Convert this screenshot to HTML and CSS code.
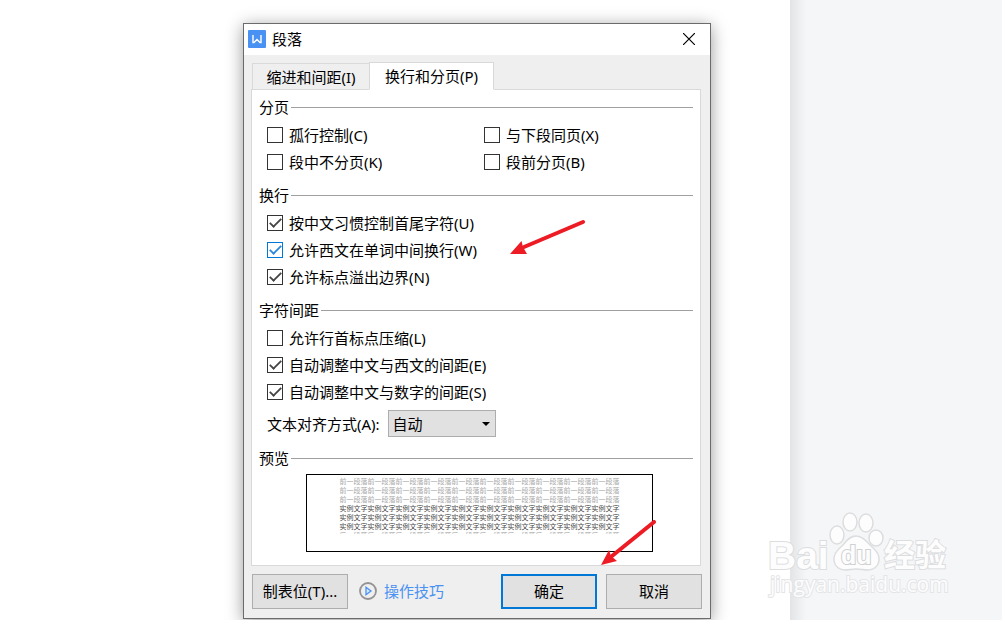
FILE: index.html
```html
<!DOCTYPE html>
<html lang="zh-CN">
<head>
    <meta charset="UTF-8">
    <meta name="viewport" content="width=device-width, initial-scale=1.0">
    <title>段落</title>
    <link rel="stylesheet" href="styles.css">
</head>
<body>
    <div class="workspace">
        <div class="page"></div>
        <div class="side"></div>
    </div>

    <!-- 段落对话框 -->
    <div class="dialog" role="dialog" aria-labelledby="dialog-title">
        <header class="titlebar">
            <svg class="logo" width="18" height="18" viewBox="0 0 18 18">
                <rect width="18" height="18" rx="1" fill="#4991f2"/>
                <path d="M5 5v7.500h1L9 9.500l3 3h1V5" fill="none" stroke="#fff" stroke-width="1.400"/>
            </svg>
            <h1 id="dialog-title">段落</h1>
            <button class="close" aria-label="关闭">
                <svg width="12" height="12" viewBox="0 0 12 12">
                    <path d="M0 0l12 12M12 0L0 12" stroke="#000" stroke-width="1.200"/>
                </svg>
            </button>
        </header>

        <div class="content">
            <div class="tabs" role="tablist">
                <button class="tab" role="tab">缩进和间距(I)</button>
                <button class="tab active" role="tab" aria-selected="true">换行和分页(P)</button>
            </div>

            <div class="panel" role="tabpanel">
                <section class="group">
                    <h2>分页</h2>
                    <div class="options two">
                        <label><input type="checkbox">孤行控制(C)</label>
                        <label><input type="checkbox">与下段同页(X)</label>
                        <label><input type="checkbox">段中不分页(K)</label>
                        <label><input type="checkbox">段前分页(B)</label>
                    </div>
                </section>

                <section class="group">
                    <h2>换行</h2>
                    <div class="options">
                        <label><input type="checkbox" checked>按中文习惯控制首尾字符(U)</label>
                        <label><input type="checkbox" class="hot" checked>允许西文在单词中间换行(W)</label>
                        <label><input type="checkbox" checked>允许标点溢出边界(N)</label>
                    </div>
                </section>

                <section class="group">
                    <h2>字符间距</h2>
                    <div class="options">
                        <label><input type="checkbox">允许行首标点压缩(L)</label>
                        <label><input type="checkbox" checked>自动调整中文与西文的间距(E)</label>
                        <label><input type="checkbox" checked>自动调整中文与数字的间距(S)</label>
                    </div>
                    <div class="align">
                        <label for="align">文本对齐方式(A):</label>
                        <span class="select">
                            <select id="align">
                                <option>自动</option>
                            </select>
                        </span>
                    </div>
                </section>

                <section class="group">
                    <h2>预览</h2>
                    <div class="preview">
                        <div class="sample">
                            <p>前一段落前一段落前一段落前一段落前一段落前一段落前一段落前一段落前一段落前一段落</p>
                            <p>前一段落前一段落前一段落前一段落前一段落前一段落前一段落前一段落前一段落前一段落</p>
                            <p>前一段落前一段落前一段落前一段落前一段落前一段落前一段落前一段落前一段落前一段落</p>
                            <p class="current">实例文字实例文字实例文字实例文字实例文字实例文字实例文字实例文字实例文字实例文字</p>
                            <p class="current">实例文字实例文字实例文字实例文字实例文字实例文字实例文字实例文字实例文字实例文字</p>
                            <p class="current">实例文字实例文字实例文字实例文字实例文字实例文字实例文字实例文字实例文字实例文字</p>
                            <p>后一段落后一段落后一段落后一段落后一段落后一段落后一段落后一段落后一段落后一段落</p>
                        </div>
                    </div>
                </section>
            </div>

            <footer class="actions">
                <button class="button">制表位(T)...</button>
                <a href="#" class="tips">
                    <svg width="18" height="18" viewBox="0 0 18 18">
                        <circle cx="9" cy="9" r="8" fill="none" stroke="#939393" stroke-width="1.800"/>
                        <path d="M7 5.200v7.600L12 9z" fill="#d9e8fd" stroke="#4991f2" stroke-width="1.300"/>
                    </svg>
                    操作技巧
                </a>
                <button class="button primary">确定</button>
                <button class="button">取消</button>
            </footer>
        </div>

        <!-- 红色箭头 -->
        <svg class="arrow arrow-wrap" width="76" height="36" viewBox="0 0 76 36">
            <path d="M14 28L73 3" stroke="#ed1c24" stroke-width="4" stroke-linecap="round"/>
            <path d="M0 35l11.500-13 1.500 6 4 7z" fill="#ed1c24"/>
        </svg>
        <svg class="arrow arrow-ok" width="56" height="46" viewBox="0 0 56 46">
            <path d="M11 36L53 2" stroke="#ed1c24" stroke-width="4" stroke-linecap="round"/>
            <path d="M0 45l8-15 2 6 6 5z" fill="#ed1c24"/>
        </svg>
    </div>

    <!-- 水印 -->
    <svg class="watermark" width="190" height="92" viewBox="0 0 190 92">
        <g fill="#fdfdfd" stroke="#dcdddf" stroke-width="1.500">
            <ellipse cx="72" cy="23" rx="7" ry="9"/>
            <ellipse cx="85" cy="10" rx="7" ry="9"/>
            <ellipse cx="101" cy="11" rx="7" ry="9"/>
            <ellipse cx="111" cy="26" rx="7" ry="8"/>
            <path d="M91 24c-7 0-10 6-14 10-5 4-9 9-8 15 1 6 6 9 11 9 4 0 7-1 11-1s8 1 12 1c5 0 10-3 11-9 1-6-3-11-8-15-4-4-8-10-15-10z"/>
        </g>
        <g class="wm-text">
            <text class="wm-name" x="3" y="57">Bai</text>
            <text class="wm-du" x="76" y="52">du</text>
            <text class="wm-cn" x="119" y="54">经验</text>
            <text class="wm-url" x="5" y="80">jingyan.baidu.com</text>
        </g>
    </svg>
</body>
</html>
```
FILE: styles.css
```css
* {
    box-sizing: border-box;
}
body {
    margin: 0;
    font-family: "Noto Sans", "Noto Sans CJK SC", sans-serif;
    font-size: 15px;
    color: #000;
    overflow: hidden;
}
h1, h2, p {
    margin: 0;
    font-weight: normal;
}
h1, h2 {
    font-size: 15px;
}
button, select {
    font-family: inherit;
    font-size: 15px;
    color: #000;
}
svg {
    display: block;
}

.workspace {
    display: flex;
    min-height: 100vh;
}
.page {
    flex: 790;
    background: #fff;
}
.side {
    flex: 212;
    background: linear-gradient(to right, #e2e4e6, #f5f6f8 16px);
}

/* dialog */
.dialog {
    position: absolute;
    top: 23px;
    left: 243px;
    width: 468px;
    background: #efefef;
    border: 1px solid #6b6b6b;
    box-shadow: 0 3px 16px rgba(0, 0, 0, 0.4);
}
.titlebar {
    display: flex;
    align-items: center;
    height: 31px;
    padding: 0 15px 2px 4px;
    background: #fff;
}
.titlebar h1 {
    margin-left: 6px;
    flex: 1;
}
.close {
    padding: 0;
    border: 0;
    background: none;
}
.content {
    padding: 7px 8px 9px 7px;
}

/* tabs */
.tabs {
    display: flex;
    align-items: flex-end;
    padding-left: 1px;
    position: relative;
    z-index: 1;
    margin-bottom: -1px;
}
.tab {
    height: 27px;
    width: 117px;
    padding: 0;
    background: #efefef;
    border: 1px solid #d9d9d9;
    border-right: 0;
    line-height: 26px;
}
.tab.active {
    width: 125px;
    height: 28px;
    background: #fff;
    border-right: 1px solid #d9d9d9;
    border-bottom-color: #fff;
}

.panel {
    margin-right: 1px;
    padding: 6px 7px 13px;
    background: #fff;
    border: 1px solid #d9d9d9;
}
.group + .group {
    margin-top: 8px;
}
.group h2 {
    display: flex;
    align-items: center;
    gap: 2px;
    line-height: 22px;
}
.group h2::after {
    content: "";
    flex: 1;
    height: 1px;
    background: #a0a0a0;
}
.options {
    display: grid;
    padding: 3px 0 1px 8px;
}
.options.two {
    grid-template-columns: 217px 1fr;
}
.options label {
    display: flex;
    align-items: center;
    gap: 6px;
    height: 27px;
}
input[type="checkbox"] {
    appearance: none;
    width: 16px;
    height: 16px;
    margin: 0;
    border: 1px solid #333;
    background: #fff;
    display: grid;
    place-items: center;
}
input[type="checkbox"]:checked::after {
    content: "";
    width: 11px;
    height: 5px;
    border-left: 2px solid #444;
    border-bottom: 2px solid #444;
    transform: translateY(-1px) rotate(-45deg) scale(0.9);
}
input.hot {
    border-color: #0078d7;
}
input.hot:checked::after {
    border-color: #2b87dd;
}

.align {
    display: flex;
    align-items: center;
    gap: 8px;
    padding: 4px 0 2px 8px;
}
.select {
    position: relative;
}
.select select {
    display: block;
    appearance: none;
    width: 108px;
    height: 27px;
    padding: 0 4px;
    background: #e1e1e1;
    border: 1px solid #adadad;
    border-radius: 0;
}
.select::after {
    content: "";
    position: absolute;
    right: 6px;
    top: 12px;
    border: 4px solid transparent;
    border-top-color: #000;
    border-bottom: 0;
}

.preview {
    width: 347px;
    height: 78px;
    margin: 5px auto 0 47px;
    padding-top: 2px;
    border: 1px solid #000;
}
.sample {
    height: 57px;
    overflow: hidden;
    text-align: center;
    font-family: "Noto Sans CJK SC", sans-serif;
    font-size: 7px;
    line-height: 9px;
    color: #a8a8a8;
    white-space: nowrap;
}
.sample .current {
    color: #484848;
}

/* bottom buttons */
.actions {
    display: flex;
    align-items: center;
    gap: 9px;
    padding: 8px 0 0 1px;
}
.button {
    width: 96px;
    height: 35px;
    padding: 0 0 2px;
    background: #e1e1e1;
    border: 1px solid #adadad;
}
.button.primary {
    border: 2px solid #0078d7;
}
.tips {
    display: flex;
    align-items: center;
    gap: 7px;
    margin: 0 auto 0 2px;
    padding-bottom: 2px;
    color: #4991f2;
    text-decoration: none;
}

.arrow {
    position: absolute;
    pointer-events: none;
}
.arrow-wrap {
    left: 266px;
    top: 195px;
}
.arrow-ok {
    left: 357px;
    top: 496px;
}

/* watermark */
.watermark {
    position: absolute;
    left: 765px;
    top: 512px;
    pointer-events: none;
}
.wm-text {
    fill: #fdfdfd;
    stroke: #dcdddf;
    stroke-width: 2px;
    paint-order: stroke;
    font-family: "Liberation Sans", "Noto Sans CJK SC", sans-serif;
    font-weight: bold;
}
.wm-name {
    font-size: 39px;
}
.wm-du {
    font-size: 25px;
    stroke: #cfd0d2;
}
.wm-cn {
    font-size: 31px;
}
.wm-url {
    font-family: "Open Sans", sans-serif;
    font-size: 21px;
    font-weight: normal;
    stroke: #e4e5e7;
}
```
